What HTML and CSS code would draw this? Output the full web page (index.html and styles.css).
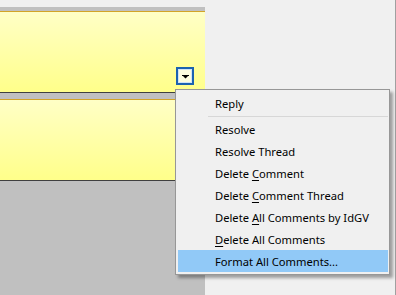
FILE: index.html
```html
<!DOCTYPE html>
<html lang="en">
  <head>
    <meta charset="UTF-8" />
    <title>Comments</title>
    <link rel="stylesheet" href="styles.css">
  </head>
  <body>
    <div class="window">
      <div class="pane">
        <div class="note first">
          <div class="note-body">
            <button class="drop-btn">
              <svg width="7" height="4" viewBox="0 0 7 4"><path d="M0 0h7v1H0zM1 1h5L3.5 3.6z" fill="#000"/></svg>
            </button>
          </div>
        </div>
        <div class="note second">
          <div class="note-body"></div>
        </div>
        <div class="pane-rest"></div>
      </div>
      <div class="side"></div>

      <ul class="menu">
        <li>Reply</li>
        <li class="sep"></li>
        <li>Resolve</li>
        <li>Resolve Thread</li>
        <li>Delete <u>C</u>omment</li>
        <li>Delete <u>C</u>omment Thread</li>
        <li>Delete <u>A</u>ll Comments by IdGV</li>
        <li><u>D</u>elete All Comments</li>
        <li class="active">Format All Comments...</li>
      </ul>
    </div>
  </body>
</html>
```

FILE: styles.css
```css
* {
  box-sizing: border-box;
}

body {
  margin: 0;
  background: #f0f0f0;
  font-family: "Noto Sans", "Open Sans", sans-serif;
  font-size: 11.2px;
}

.window {
  position: relative;
  display: flex;
  width: 396px;
  height: 295px;
  border-right: 1px solid #a0a0a0;
}

.pane {
  width: 205px;
  display: flex;
  flex-direction: column;
  padding-top: 7px;
}

.note {
  border-top: 4px solid #c0c0c0;
}

.note.second {
  border-top-width: 6px;
}

.note-body {
  height: 82px;
  border-top: 1px solid #d2a428;
  border-bottom: 1px solid #404040;
  background: linear-gradient(#ffffc6, #ffff8a);
  display: flex;
  justify-content: flex-end;
  align-items: flex-end;
  padding: 0 11px 7px 0;
}

.drop-btn {
  width: 18px;
  height: 18px;
  padding: 0;
  margin: 0;
  border: 2px solid #1c62b0;
  box-shadow: inset 0 0 0 1px #cfe4f7;
  background: #fdfde0;
  display: flex;
  align-items: center;
  justify-content: center;
  padding-top: 2px;
}

.drop-btn svg {
  display: block;
}

.pane-rest {
  flex: 1;
  background: #c0c0c0;
}

.side {
  flex: 1;
}

.menu {
  position: absolute;
  left: 175px;
  top: 89px;
  width: 215px;
  margin: 0;
  padding: 2px 1px 2px 2px;
  list-style: none;
  background: #f0f0f0;
  border: 1px solid #979797;
  box-shadow: 3px 3px 3px rgba(0, 0, 0, 0.35);
  color: #000;
}

.menu li {
  height: 22px;
  padding-top: 2px;
  line-height: 20px;
  padding-left: 37px;
  white-space: nowrap;
}

.menu li.sep {
  height: 4px;
  margin-left: 30px;
  padding: 0;
  border-top: 2px solid #f0f0f0;
  border-bottom: 1px solid #f0f0f0;
  background: #d7d7d7;
}

.menu li.active {
  background: #91c9f7;
}

.menu u {
  text-underline-offset: 2px;
}
```
